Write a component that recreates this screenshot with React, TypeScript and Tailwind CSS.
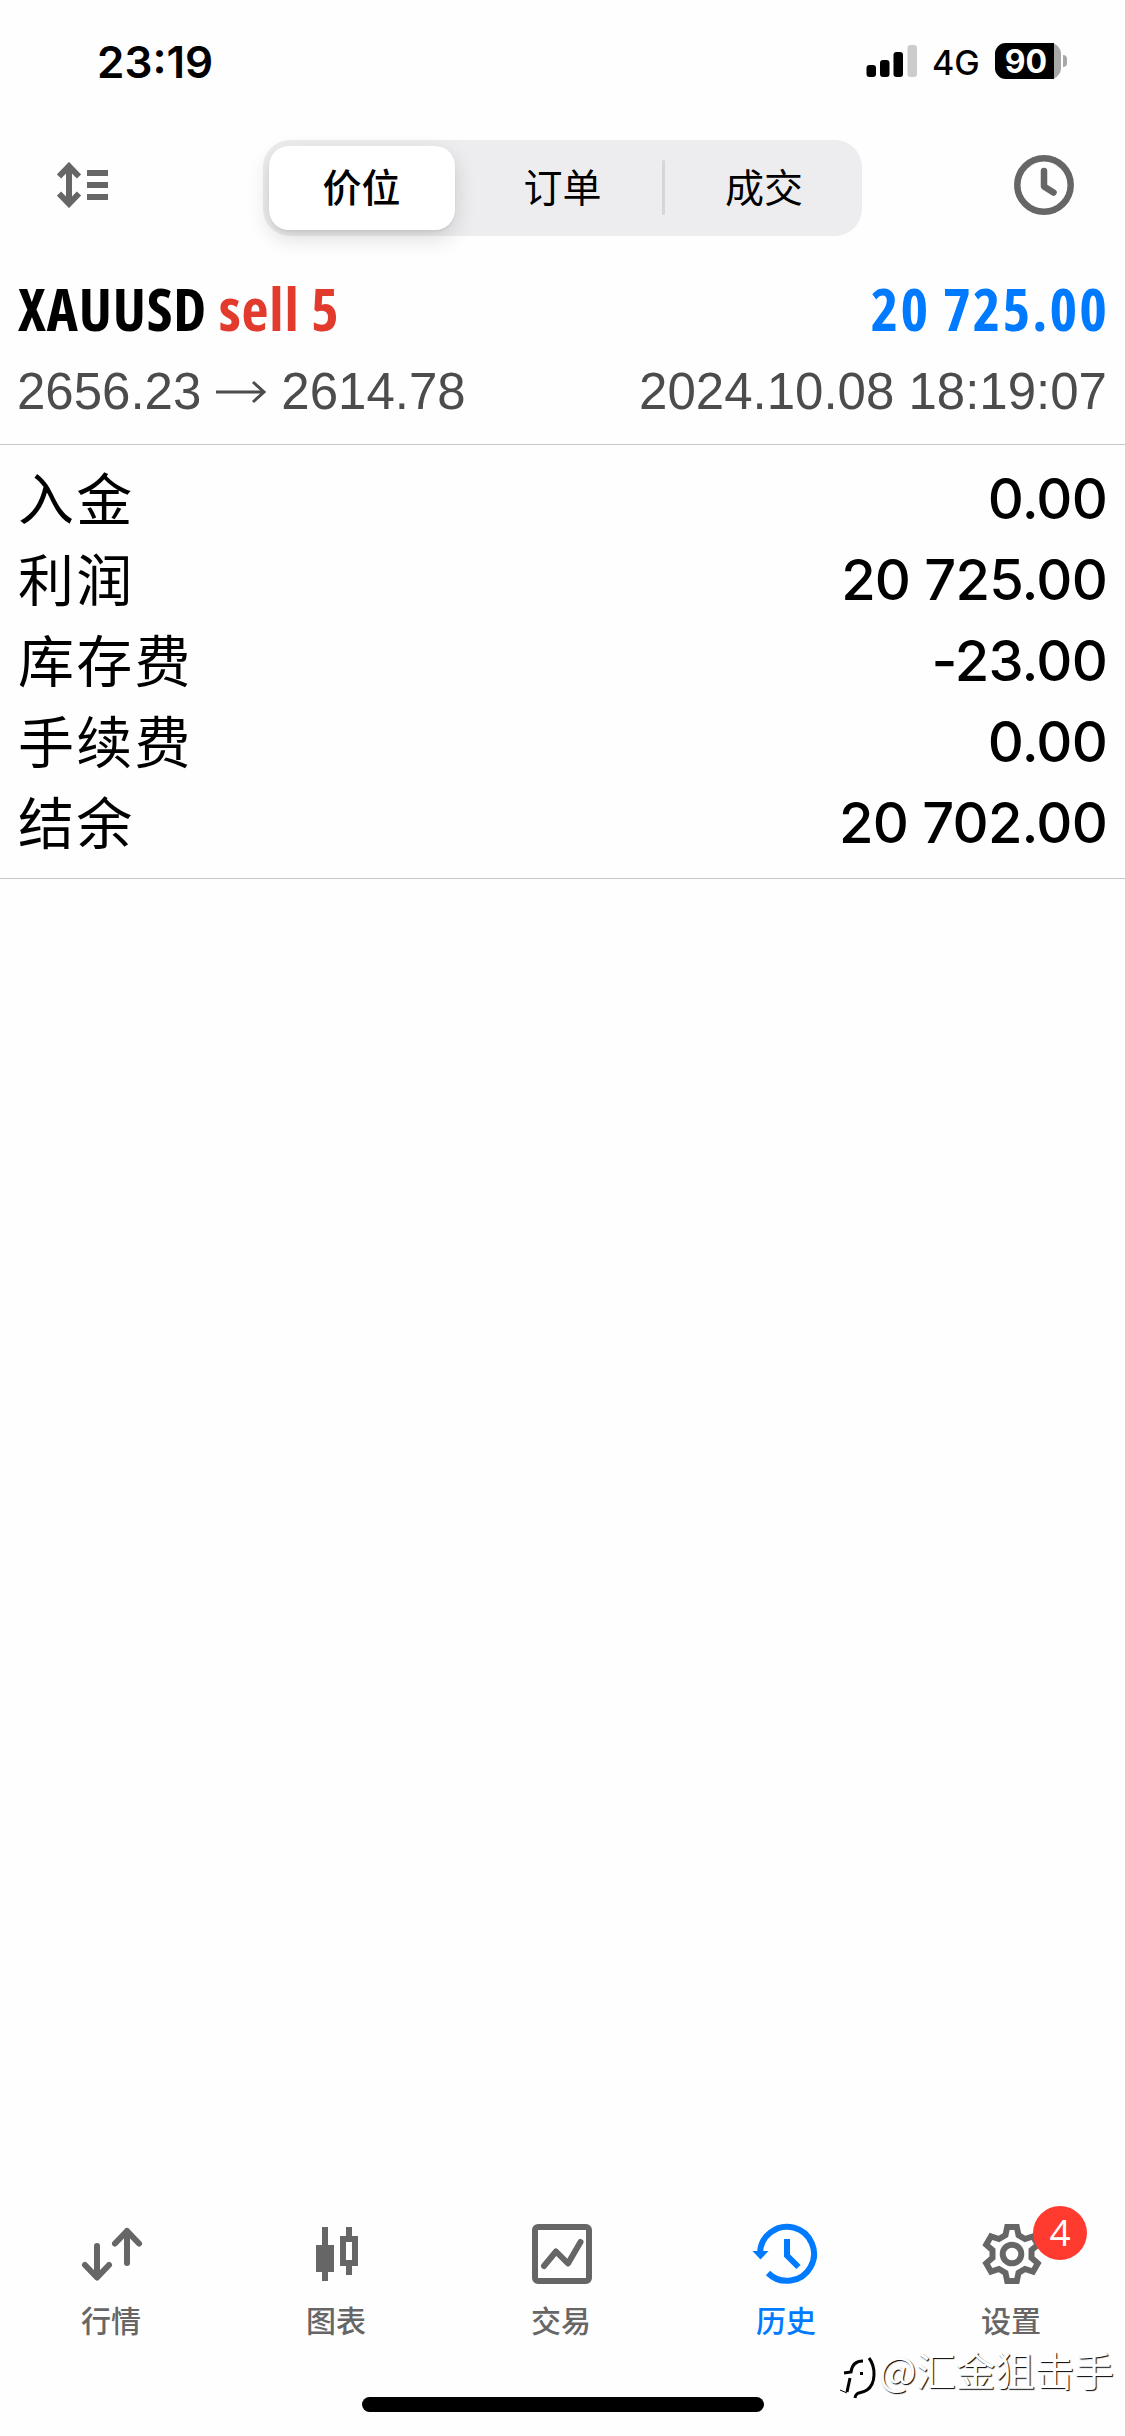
import type { ReactNode } from 'react';

const GRAY = '#666666';
const BLUE = '#007aff';

const summary = [
  { label: '入金', value: '0.00' },
  { label: '利润', value: '20 725.00' },
  { label: '库存费', value: '-23.00' },
  { label: '手续费', value: '0.00' },
  { label: '结余', value: '20 702.00' },
];

function StatusBar() {
  return (
    <div className="h-[124px] pl-[97px] pr-[58px] flex items-start justify-between font-['Inter',sans-serif] text-black">
      <div className="mt-[36px] text-[44px] leading-[52px] font-semibold">23:19</div>
      <div className="mt-[43px] flex items-center h-[36px]">
        <svg width="52" height="36" viewBox="0 0 52 36">
          <rect x="0.5" y="22" width="9.5" height="12" rx="3" />
          <rect x="14" y="17" width="9.5" height="17" rx="3" />
          <rect x="27.5" y="9" width="9.5" height="25" rx="3" />
          <rect x="41.5" y="2" width="9.5" height="32" rx="3" fill="#cccccc" />
        </svg>
        <span className="ml-[14px] mt-[3px] w-[63px] text-[34px] leading-[36px] font-medium">4G</span>
        <div className="flex items-center">
          <div className="w-[66px] h-[36px] rounded-[11px] bg-[#a8a8a8]">
            <div className="w-[59px] h-[36px] pl-[3px] rounded-l-[11px] bg-black text-white text-[32px] leading-[37px] font-bold text-center">90</div>
          </div>
          <div className="ml-[2px] w-[4px] h-[12px] rounded-r-full bg-[#a8a8a8]" />
        </div>
      </div>
    </div>
  );
}

function Toolbar() {
  return (
    <div className="h-[128px] pl-[57px] pr-[51px] flex items-start justify-between">
      <svg className="mt-[38px]" width="52" height="46" viewBox="0 0 52 46" fill="none" stroke={GRAY} strokeWidth="6">
        <path d="M12 4V42M2 14.5L12 4.2L22 14.5M2 31.5L12 41.8L22 31.5" />
        <path d="M30 11H51M30 23H51M30 35H51" />
      </svg>
      <div className="mt-[16px] ml-[1px] w-[599px] h-[96px] rounded-[27px] bg-[#ededef] p-[6px] flex text-[39px] leading-[78px] text-center text-black font-['Noto_Sans_CJK_SC',sans-serif]">
        <div className="w-[186px] h-[84px] rounded-[20px] bg-white shadow-[0_8px_22px_rgba(0,0,0,0.14),0_2px_3px_rgba(0,0,0,0.06)] font-medium">价位</div>
        <div className="w-[207px] pl-[9px]">订单</div>
        <div className="w-[3px] h-[55px] mt-[14px] rounded-full bg-[#d6d6d9]" />
        <div className="flex-1 pl-[8px]">成交</div>
      </div>
      <svg className="mt-[31px]" width="60" height="60" viewBox="0 0 60 60" fill="none" stroke={GRAY} strokeWidth="6.5">
        <circle cx="30" cy="30" r="26.7" />
        <path d="M30 16V31.5L39.5 37.5" strokeLinecap="round" strokeLinejoin="round" />
      </svg>
    </div>
  );
}

function Deal() {
  return (
    <div className="h-[193px] px-[18px] border-b border-[#c6c6c8]">
      <div className="pt-[16px] flex justify-between font-['Open_Sans',sans-serif] font-bold text-[59px] leading-[80px] [font-stretch:75%] whitespace-nowrap">
        <div className="tracking-[0.85px]">
          <span className="text-black">XAUUSD</span> <span className="text-[#e23b2e]">sell 5</span>
        </div>
        <div className="text-[#007aff] tracking-[2.1px] mr-[-2px]">20 725.00</div>
      </div>
      <div className="pt-[4px] flex justify-between font-['Liberation_Sans',sans-serif] text-[51px] leading-[80px] text-[#4c4c4f] whitespace-nowrap">
        <div className="flex items-center ml-[-1px]">
          2656.23
          <svg className="ml-[14px] mr-[14px]" width="52" height="24" viewBox="0 0 52 24" fill="none" stroke="#4c4c4f" strokeWidth="3">
            <path d="M1 12H49M38 2L49 12L38 22" />
          </svg>
          2614.78
        </div>
        <div>2024.10.08 18:19:07</div>
      </div>
    </div>
  );
}

function Summary() {
  return (
    <div className="h-[434px] pt-[14px] px-[18px] border-b border-[#c6c6c8] text-black">
      {summary.map(row => (
        <div key={row.label} className="h-[81px] flex items-start justify-between whitespace-nowrap">
          <span className="font-['Noto_Sans_CJK_SC',sans-serif] text-[56px] leading-[73px] tracking-[2.3px]">{row.label}</span>
          <span className="font-['Inter',sans-serif] text-[56px] leading-[81px] font-medium tracking-[-0.8px]">{row.value}</span>
        </div>
      ))}
    </div>
  );
}

function Tab({ label, active, children }: { label: string; active?: boolean; children: ReactNode }) {
  return (
    <div className={`w-[225px] pr-px shrink-0 flex flex-col items-center ${active ? 'text-[#007aff]' : 'text-[#666666]'}`}>
      <div className="relative w-[72px] h-[72px]">{children}</div>
      <span className="mt-[7px] pr-[2px] font-['Noto_Sans_CJK_SC',sans-serif] text-[30px] leading-[44px] font-medium">{label}</span>
    </div>
  );
}

function TabBar() {
  return (
    <div className="h-[179px] flex">
      <Tab label="行情">
        <svg width="72" height="72" viewBox="0 0 72 72" fill="none" stroke={GRAY} strokeWidth="6" strokeLinecap="round" strokeLinejoin="round">
          <path d="M21 28V59M9 47L21 59.5L33 47" />
          <path d="M51 45V13M39 25.5L51 13L63 25.5" />
        </svg>
      </Tab>
      <Tab label="图表">
        <svg width="72" height="72" viewBox="0 0 72 72" fill={GRAY}>
          <path d="M21 9h6v18h6v27h-6v9h-6v-9h-6V27h6z" />
          <path fillRule="evenodd" d="M45 9h6v9h6v30h-6v9h-6v-9h-6V18h6zM45 24v18h6V24z" />
        </svg>
      </Tab>
      <Tab label="交易">
        <svg width="72" height="72" viewBox="0 0 72 72" fill="none" stroke={GRAY} strokeWidth="6" strokeLinecap="round" strokeLinejoin="round">
          <rect x="9" y="9" width="54" height="54" rx="3" />
          <path d="M18 48L30 33.5L42 45.5L54.5 24" />
        </svg>
      </Tab>
      <Tab label="历史" active>
        <svg className="overflow-visible" width="72" height="72" viewBox="0 0 72 72" fill="none" stroke={BLUE} strokeWidth="6">
          <path d="M9 36A27 27 0 1 1 17 55" />
          <path d="M36 21V37.5L47.5 49" />
          <path d="M1.5 33H17.5L9.5 41.5Z" fill={BLUE} stroke="none" />
        </svg>
      </Tab>
      <Tab label="设置">
        <svg width="72" height="72" viewBox="0 0 72 72" fill="none" stroke={GRAY} strokeWidth="6">
          <path d="M40.8 9L42.5 17.2L49 21L57 18.3L61.8 26.7L55.5 32.2V39.8L61.8 45.3L57 53.7L49 51L42.5 54.8L40.8 63H31.2L29.5 54.8L23 51L15 53.7L10.2 45.3L16.5 39.8V32.2L10.2 26.7L15 18.3L23 21L29.5 17.2L31.2 9Z" />
          <circle cx="36" cy="36" r="9.3" />
        </svg>
        <div className="absolute left-[57px] top-[-12px] w-[54px] h-[54px] rounded-full bg-[#ff3b30] text-white text-center font-['Open_Sans',sans-serif] text-[37px] leading-[52px]">4</div>
      </Tab>
    </div>
  );
}

function Watermark() {
  return (
    <div className="absolute left-[840px] top-[2339px] flex items-center h-[60px] whitespace-nowrap">
      <svg className="mt-[10px] overflow-visible" width="39" height="52" viewBox="0 0 39 52" fill="none" stroke="#000000" strokeWidth="3">
        <path d="M4 25L11 24C12 16 16 13 23 13" />
        <path d="M7 44L10 30M15 50C16 43 21 46 27 42C36 36 36 19 29 10" />
        <path d="M20 25.5H23" />
        <path d="M0 42L7 45" strokeWidth="1" />
      </svg>
      <span className="text-white text-[39.5px] leading-[60px] font-['Noto_Sans_CJK_SC',sans-serif] [text-shadow:1px_1px_1px_#000]">@汇金狙击手</span>
    </div>
  );
}

export default function App() {
  return (
    <div className="relative w-[1125px] h-[2436px] bg-[#fefefe] flex flex-col overflow-hidden">
      <StatusBar />
      <Toolbar />
      <Deal />
      <Summary />
      <div className="flex-1" />
      <TabBar />
      <div className="h-[39px] flex justify-center">
        <div className="w-[402px] h-[15px] rounded-full bg-black" />
      </div>
      <Watermark />
    </div>
  );
}
